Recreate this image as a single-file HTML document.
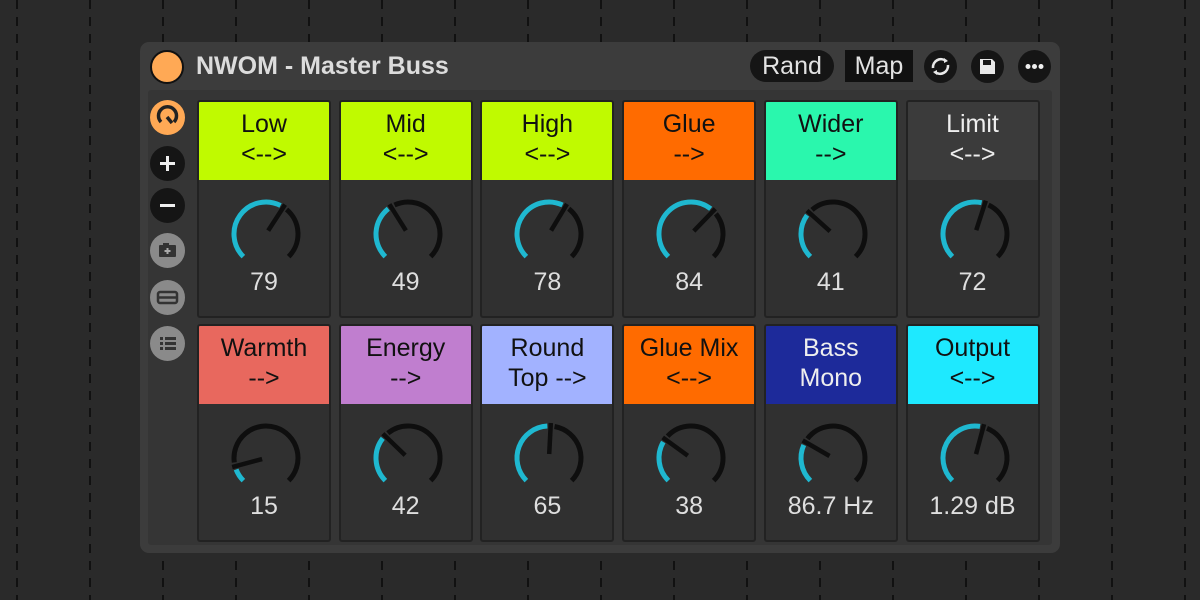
<!DOCTYPE html>
<html><head><meta charset="utf-8"><style>
*{margin:0;padding:0;box-sizing:border-box}
body{width:1200px;height:600px;overflow:hidden;background:#2a2a2a;font-family:"Liberation Sans",sans-serif;position:relative}
.dl{position:absolute;top:0;width:2px;height:600px;background:repeating-linear-gradient(to bottom,#111 0 9px,transparent 9px 17px)}
.panel{position:absolute;left:140px;top:42px;width:920px;height:511px;background:#3c3c3c;border-radius:9px}
.inner{position:absolute;left:8px;top:48px;width:904px;height:455px;background:#353535;border-radius:3px}
.title{position:absolute;left:56px;top:10px;font-size:25px;font-weight:bold;color:#dcdcdc}
.dot{position:absolute;left:10px;top:8px;width:34px;height:34px;border-radius:50%;background:#ffa955;border:2px solid #111}
.btn{position:absolute;top:8px;height:32px;background:#151515;color:#e2e2e2;font-size:25px;line-height:32px;text-align:center}
.rb{position:absolute;top:8px;width:33px;height:33px;border-radius:50%;background:#151515}
.tile{position:absolute;width:134px;background:#303030;border:2px solid #222;border-radius:3px;overflow:hidden}
.hd{height:78px;text-align:center;font-size:25px;line-height:30px;padding-top:7px;color:#111}
.val{position:absolute;left:0;right:0;top:166px;text-align:center;font-size:25px;color:#dedede}
.si{position:absolute;left:150px;width:35px;height:35px;border-radius:50%}
</style></head><body>
<div id="lines"></div>
<div class="panel">
<div class="inner"></div>
<div class="dot"></div>
<div class="title">NWOM - Master Buss</div>
<div class="btn" style="left:610px;width:84px;border-radius:16px">Rand</div>
<div class="btn" style="left:705px;width:68px;background:#111">Map</div>
<div class="rb" style="left:784px"><svg width="33" height="33" viewBox="0 0 33 33"><path d="M9 18a8 8 0 0 1 13-7M24 15a8 8 0 0 1-13 7" stroke="#e8e8e8" stroke-width="2.6" fill="none"/><path d="M20 8l4 3-4 2z M13 25l-4-3 4-2z" fill="#e8e8e8"/></svg></div>
<div class="rb" style="left:831px"><svg width="33" height="33" viewBox="0 0 33 33"><path d="M9 9h12l3 3v12H9z" fill="#e8e8e8"/><rect x="12" y="10" width="8" height="5" fill="#151515"/></svg></div>
<div class="rb" style="left:878px"><svg width="33" height="33" viewBox="0 0 33 33"><circle cx="10" cy="16.5" r="2.5" fill="#eee"/><circle cx="16.5" cy="16.5" r="2.5" fill="#eee"/><circle cx="23" cy="16.5" r="2.5" fill="#eee"/></svg></div>
</div>
<div class="si" style="top:100px;background:#ffa955"><svg width="35" height="35" viewBox="0 0 35 35"><path d="M11 22a9 9 0 1 1 13 0" stroke="#222" stroke-width="3.5" fill="none"/><path d="M17 17l5 6" stroke="#222" stroke-width="3.5"/></svg></div>
<div class="si" style="top:146px;background:#151515"><svg width="35" height="35"><path d="M17.5 10v15M10 17.5h15" stroke="#eee" stroke-width="3"/></svg></div>
<div class="si" style="top:188px;background:#151515"><svg width="35" height="35"><path d="M10 17.5h15" stroke="#eee" stroke-width="3"/></svg></div>
<div class="si" style="top:233px;background:#8a8a8a"><svg width="35" height="35"><rect x="9" y="12" width="17" height="12" rx="1" fill="#333"/><rect x="13" y="10" width="6" height="3" fill="#333"/><path d="M17.5 15v6M14.5 18h6" stroke="#aaa" stroke-width="2"/></svg></div>
<div class="si" style="top:280px;background:#8a8a8a"><svg width="35" height="35"><rect x="8" y="12" width="19" height="11" rx="2" fill="none" stroke="#333" stroke-width="2.5"/><path d="M9 17.5h17" stroke="#333" stroke-width="2.5"/></svg></div>
<div class="si" style="top:326px;background:#8a8a8a"><svg width="35" height="35"><g fill="#333"><rect x="10" y="11" width="3" height="3"/><rect x="10" y="16" width="3" height="3"/><rect x="10" y="21" width="3" height="3"/><rect x="15" y="11" width="11" height="3"/><rect x="15" y="16" width="11" height="3"/><rect x="15" y="21" width="11" height="3"/></g></svg></div>
<div id="tiles"></div>
<script>
var L='';for(var i=0;i<17;i++){L+='<div class="dl" style="left:'+(16+i*73)+'px"></div>';}
document.getElementById('lines').innerHTML=L;
var T=[
["Low","&lt;--&gt;","#c0fa00","#111","79",33],
["Mid","&lt;--&gt;","#c0fa00","#111","49",-32],
["High","&lt;--&gt;","#c0fa00","#111","78",31],
["Glue","--&gt;","#ff6b00","#111","84",44],
["Wider","--&gt;","#2af7ad","#111","41",-48],
["Limit","&lt;--&gt;","#3b3b3b","#eee","72",18],
["Warmth","--&gt;","#e8685e","#111","15",-105],
["Energy","--&gt;","#c07ecf","#111","42",-46],
["Round","Top --&gt;","#a2b2ff","#111","65",3],
["Glue Mix","&lt;--&gt;","#ff6b00","#111","38",-54],
["Bass","Mono","#1d2a9a","#eee","86.7 Hz",-60],
["Output","&lt;--&gt;","#1ee9ff","#111","1.29 dB",15]];
function pt(cx,cy,r,a){a=a*Math.PI/180;return (cx+r*Math.sin(a)).toFixed(2)+' '+(cy-r*Math.cos(a)).toFixed(2);}
function arc(cx,cy,r,a0,a1,c){if(a1<=a0)return '';return '<path d="M'+pt(cx,cy,r,a0)+' A'+r+' '+r+' 0 '+((a1-a0)>180?1:0)+' 1 '+pt(cx,cy,r,a1)+'" stroke="'+c+'" stroke-width="5" fill="none"/>';}
var h='';
T.forEach(function(t,i){var col=i%6,row=Math.floor(i/6);var x=197+col*141.7,y=100+row*224;
var cx=67,cy=54,r=32,a=t[5];
var s='<svg width="134" height="140" style="position:absolute;left:0;top:78px">'+arc(cx,cy,r,-135,a-6,'#1fb8d0')+arc(cx,cy,r,a+7,135,'#0e0e0e')+'<path d="M'+pt(cx,cy,4,a)+' L'+pt(cx,cy,35,a)+'" stroke="#0e0e0e" stroke-width="4.5"/></svg>';
h+='<div class="tile" style="left:'+x+'px;top:'+y+'px;height:218px"><div class="hd" style="background:'+t[2]+';color:'+t[3]+'">'+t[0]+'<br>'+t[1]+'</div>'+s+'<div class="val">'+t[4]+'</div></div>';});
document.getElementById('tiles').innerHTML=h;
</script>
</body></html>
